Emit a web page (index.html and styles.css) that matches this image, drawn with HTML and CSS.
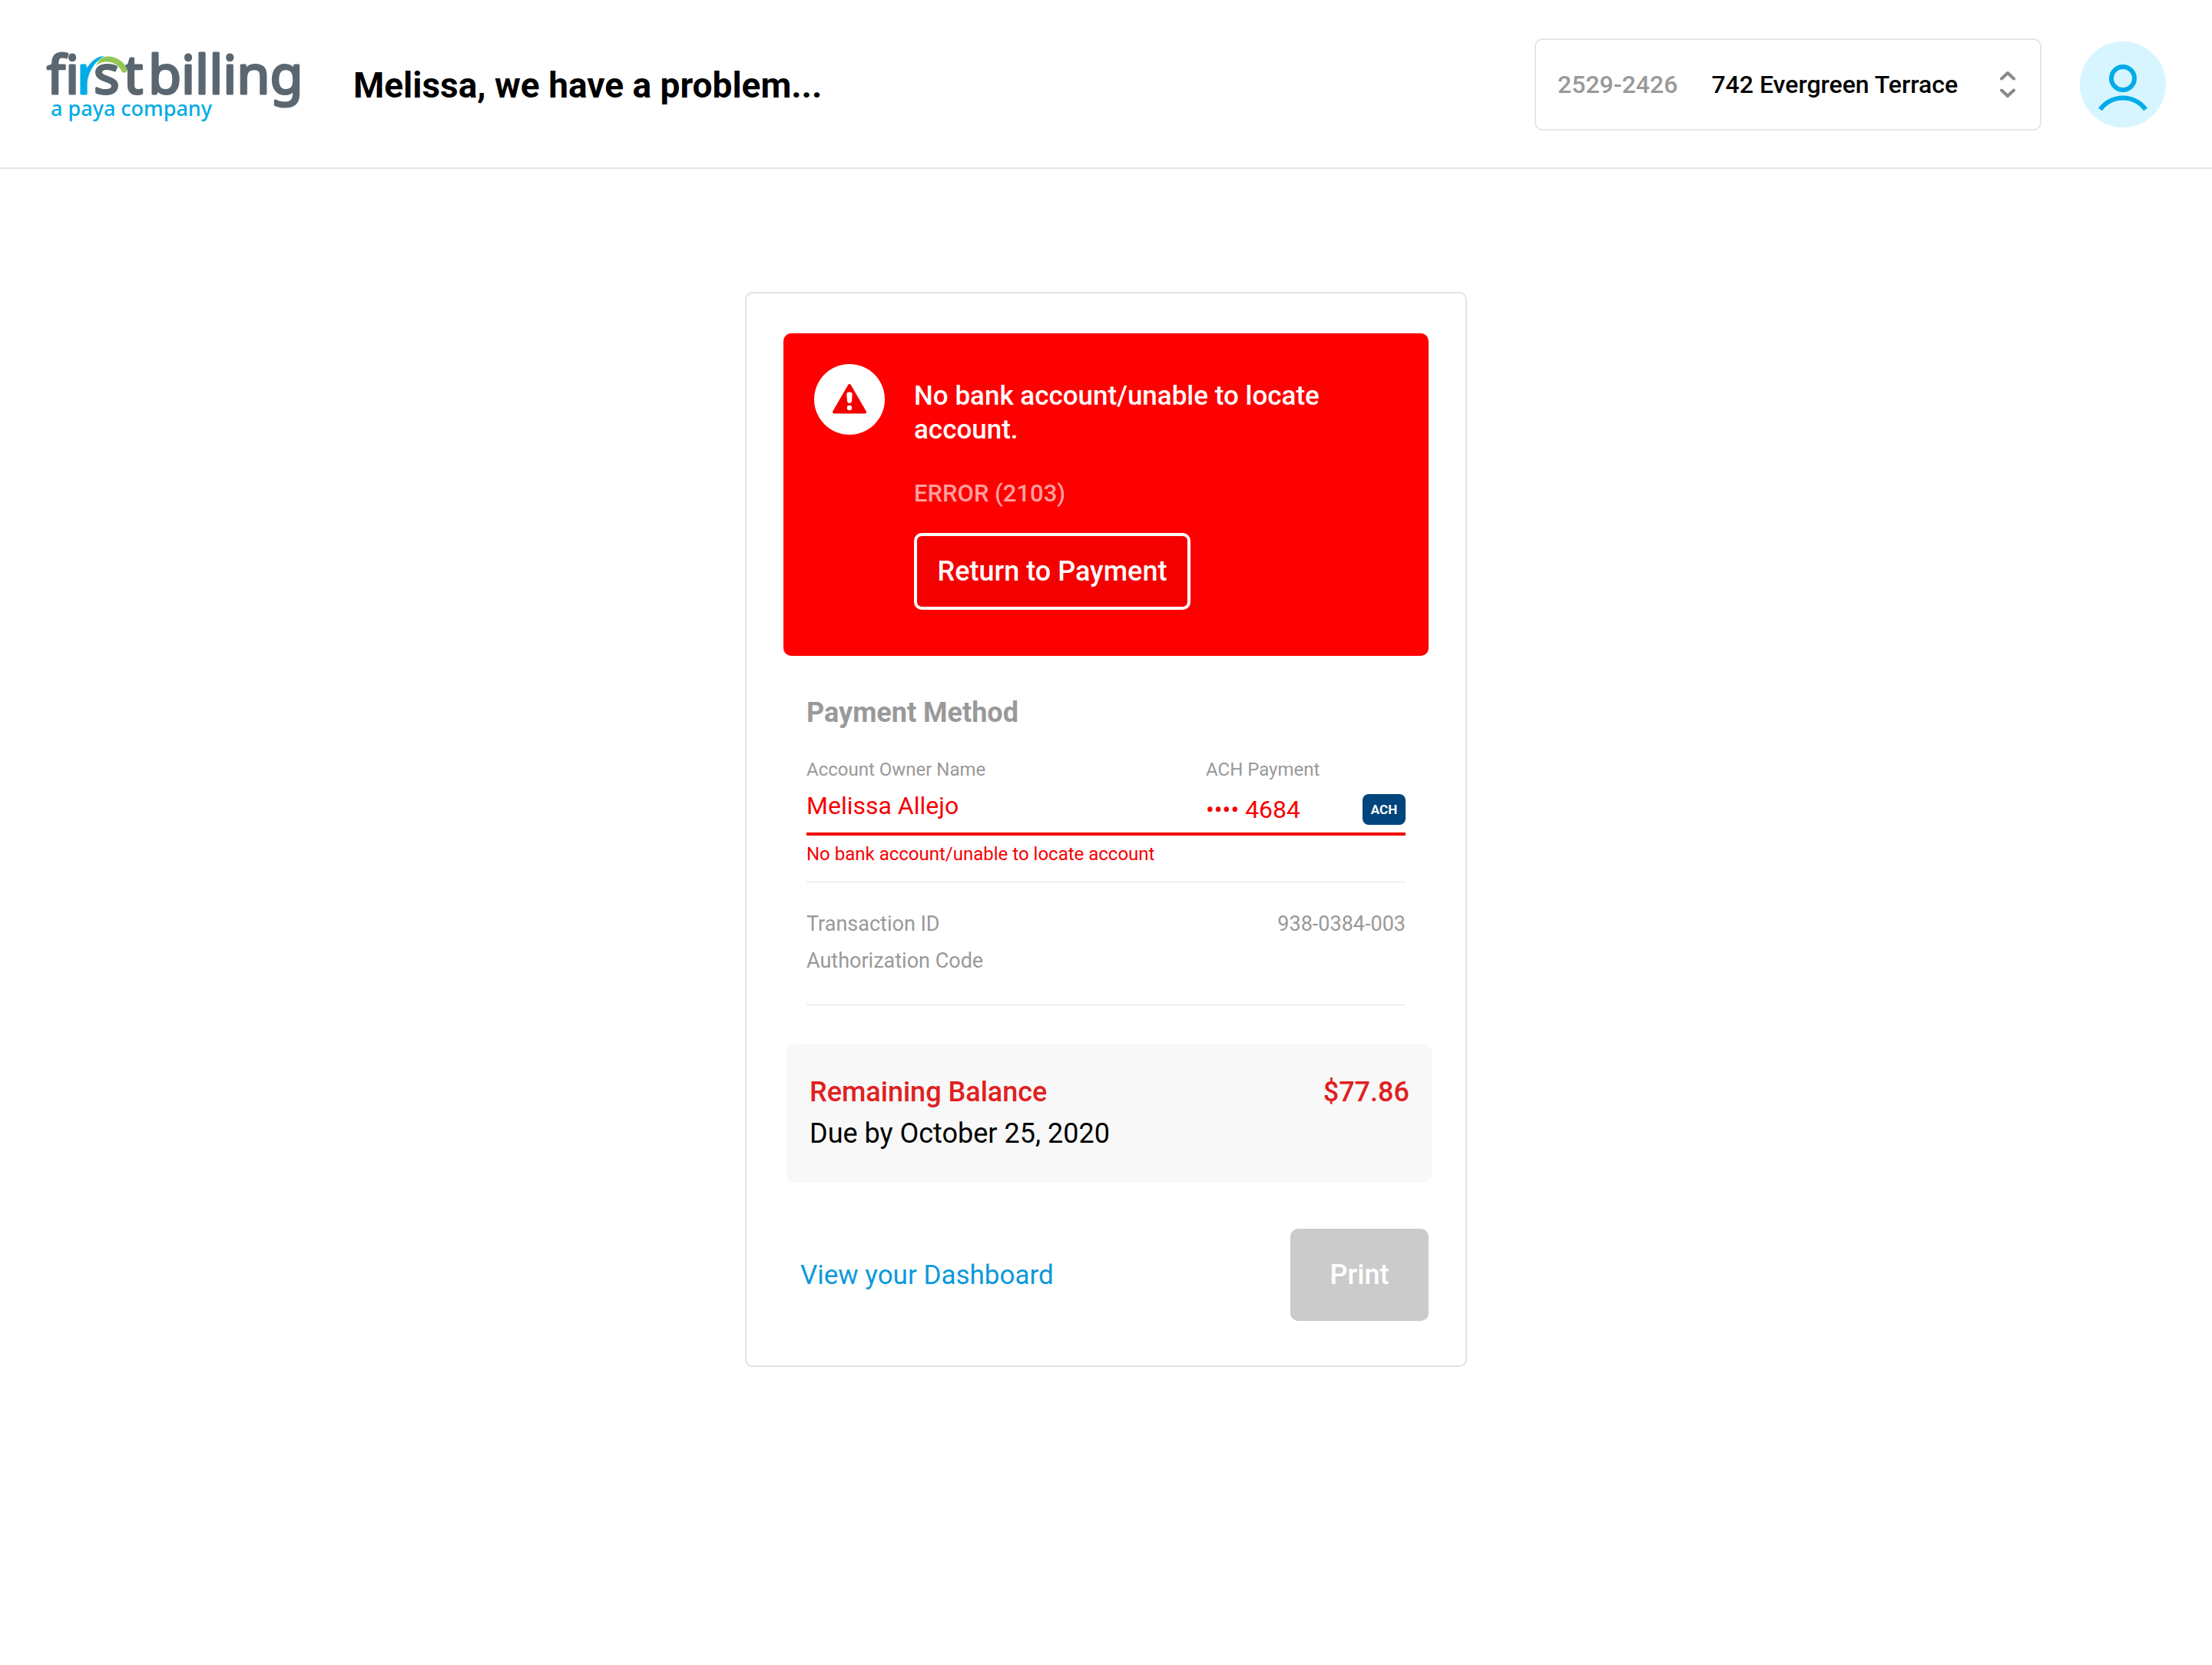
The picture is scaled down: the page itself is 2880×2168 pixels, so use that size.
FILE: index.html
```html
<!DOCTYPE html>
<html lang="en">
<head>
  <meta charset="utf-8">
  <meta name="viewport" content="width=device-width, initial-scale=1">
  <title>Payment problem</title>
  <link rel="stylesheet" href="styles.css">
</head>
<body>
  <header class="topbar">
    <svg class="logo" viewBox="0 0 336 96" role="img" aria-label="firstbilling, a paya company">
      <defs>
        <clipPath id="r-stem"><rect x="36" y="-20" width="19" height="110"/></clipPath>
      </defs>
      <text class="logo-word" x="1" y="60">fi</text>
      <text class="logo-word logo-blue" x="40" y="60" clip-path="url(#r-stem)">r</text>
      <text class="logo-word" x="62" y="60">s</text>
      <text class="logo-word" x="101" y="60">t</text>
      <text class="logo-word" x="133" y="60">billing</text>
      <path class="logo-swoosh-blue" d="M53 27C58 19 65 11 76 11.300C66 16 56 28 53.300 46Z"/>
      <path class="logo-swoosh-green" d="M64.700 24C68 17 72 12 79 11.500C90 10.500 102 18 105.500 28C106 33 100 34.500 98 30C94 22 86 18 77 18.600C72 19 68 21 64.700 24Z"/>
      <text class="logo-tagline" x="6" y="89">a paya company</text>
    </svg>
    <h1 class="page-title">Melissa, we have a problem...</h1>
    <div class="account-picker">
      <label class="account-number" for="account">2529-2426</label>
      <select class="account-select" id="account">
        <option>742 Evergreen Terrace</option>
      </select>
      <svg class="account-arrows" viewBox="0 0 20 36" aria-hidden="true">
        <path d="M2 10.500L10 3L18 10.500M2 25.500L10 33L18 25.500"/>
      </svg>
    </div>
    <button class="avatar" type="button" aria-label="Profile">
      <svg class="avatar-icon" viewBox="0 0 112 112" aria-hidden="true">
        <circle cx="56" cy="48" r="15"/>
        <path d="M26.500 88.500A36.500 36.500 0 0 1 85.500 88.500"/>
      </svg>
    </button>
  </header>

  <main class="page">
    <section class="card">
      <div class="alert" role="alert">
        <svg class="alert-icon" viewBox="0 0 92 92" aria-hidden="true">
          <circle cx="46" cy="46" r="46" fill="#fff"/>
          <path d="M46 28L66 62.500H26Z" fill="#f50000" stroke="#f50000" stroke-width="4" stroke-linejoin="round"/>
          <path d="M42.300 39Q42.300 36.500 46 36.500T49.700 39L49 48.500Q48.700 51 46 51T43 48.500Z" fill="#fff"/>
          <circle cx="46" cy="57" r="3.200" fill="#fff"/>
        </svg>
        <div class="alert-body">
          <h2 class="alert-title">No bank account/unable to locate account.</h2>
          <p class="alert-code">ERROR (2103)</p>
          <button class="alert-button" type="button">Return to Payment</button>
        </div>
      </div>

      <div class="details">
        <h2 class="details-title">Payment Method</h2>
        <dl class="method">
          <div class="method-owner">
            <dt class="method-label">Account Owner Name</dt>
            <dd class="method-value">Melissa Allejo</dd>
          </div>
          <div class="method-account">
            <dt class="method-label">ACH Payment</dt>
            <dd class="method-value">•••• 4684 <span class="ach-badge">ACH</span></dd>
          </div>
        </dl>
        <p class="method-error">No bank account/unable to locate account</p>
        <dl class="codes">
          <div class="codes-row"><dt>Transaction ID</dt><dd>938-0384-003</dd></div>
          <div class="codes-row"><dt>Authorization Code</dt><dd></dd></div>
        </dl>
      </div>

      <div class="balance">
        <p class="balance-row"><span>Remaining Balance</span><span>$77.86</span></p>
        <p class="balance-due">Due by October 25, 2020</p>
      </div>

      <div class="actions">
        <a class="dashboard-link" href="#dashboard">View your Dashboard</a>
        <button class="print-button" type="button" disabled>Print</button>
      </div>
    </section>
  </main>
</body>
</html>
```
FILE: styles.css
```css
* {
  box-sizing: border-box;
}

body,
h1,
h2,
p,
dl,
dd {
  margin: 0;
}

body {
  background: #fff;
  color: #000;
  font-family: Roboto, "Liberation Sans", sans-serif;
}

button,
select {
  margin: 0;
  padding: 0;
  border: 0;
  font: inherit;
}

/* Top bar */

.topbar {
  display: flex;
  align-items: center;
  padding: 50px 60px 48px;
  border-bottom: 2px solid #e6e6e6;
}

.logo {
  flex: none;
  width: 336px;
  height: 96px;
  margin-right: 64px;
  overflow: visible;
}

.logo-word {
  fill: #5b6770;
  stroke: #5b6770;
  stroke-width: 3px;
  stroke-linejoin: round;
  font: 400 70px "Noto Sans", sans-serif;
}

.logo-blue {
  fill: #00ace6;
  stroke: #00ace6;
}

.logo-swoosh-blue {
  fill: #00ace6;
}

.logo-swoosh-green {
  fill: #93c755;
}

.logo-tagline {
  fill: #00ace6;
  font: 500 27px "Noto Sans", sans-serif;
}

.page-title {
  padding-top: 2px;
  font-size: 46px;
  font-weight: 700;
  line-height: 56px;
}

.account-picker {
  display: flex;
  align-items: center;
  width: 660px;
  height: 120px;
  margin-left: auto;
  padding: 0 32px 0 28px;
  border: 2px solid #e6e6e6;
  border-radius: 10px;
  font-size: 32px;
  font-weight: 500;
  line-height: 40px;
}

.account-number {
  margin-right: 44px;
  color: #999;
}

.account-select {
  flex: 1;
  height: 100%;
  appearance: none;
  background: none;
  color: #000;
}

.account-arrows {
  width: 20px;
  height: 36px;
  fill: none;
  stroke: #888;
  stroke-width: 4px;
  stroke-linecap: round;
  stroke-linejoin: round;
}

.avatar {
  flex: none;
  width: 112px;
  height: 112px;
  margin-left: 50px;
  border-radius: 50%;
  background: #d7f5ff;
}

.avatar-icon {
  display: block;
  fill: none;
  stroke: #00ace8;
  stroke-width: 6px;
}

/* Result card */

.page {
  padding: 160px 24px;
}

.card {
  max-width: 940px;
  margin: 0 auto;
  padding: 52px 48px 58px;
  border: 2px solid #e2e2e2;
  border-radius: 10px;
}

.alert {
  display: flex;
  gap: 38px;
  padding: 40px 40px 60px;
  border-radius: 10px;
  background: #f00;
  color: #fff;
}

.alert-icon {
  flex: none;
  width: 92px;
  height: 92px;
}

.alert-body {
  padding-top: 20px;
}

.alert-title {
  font-size: 35px;
  font-weight: 500;
  line-height: 44px;
}

.alert-code {
  margin: 41px 0 31px;
  color: #ff9f9f;
  font-size: 31px;
  font-weight: 500;
  line-height: 40px;
}

.alert-button {
  width: 360px;
  height: 100px;
  border: 4px solid #fff;
  border-radius: 10px;
  background: #f50000;
  color: #fff;
  font-size: 36px;
  font-weight: 500;
}

.details {
  padding: 52px 30px 0;
}

.details-title {
  color: #999;
  font-size: 36px;
  font-weight: 700;
  line-height: 44px;
}

.method {
  display: grid;
  grid-template-columns: 2fr 1fr;
  margin-top: 36px;
  padding-bottom: 10px;
  border-bottom: 4px solid #f50000;
}

.method-label {
  margin-bottom: 11px;
  color: #999;
  font-size: 24px;
  line-height: 32px;
}

.method-account .method-label {
  margin-bottom: 16px;
}

.method-value {
  display: flex;
  align-items: center;
  justify-content: space-between;
  color: #f50000;
  font-size: 32px;
  line-height: 40px;
}

.ach-badge {
  width: 56px;
  height: 40px;
  border-radius: 8px;
  background: #00457c;
  color: #fff;
  font-size: 17px;
  font-weight: 700;
  line-height: 40px;
  text-align: center;
}

.method-error {
  margin-top: 8px;
  color: #f50000;
  font-size: 24px;
  line-height: 32px;
}

.codes {
  margin-top: 20px;
  padding: 30px 0 33px;
  border: solid #e2e2e2;
  border-width: 1px 0;
  color: #999;
  font-size: 27px;
  line-height: 48px;
}

.codes-row {
  display: flex;
  justify-content: space-between;
}

.balance {
  margin: 51px -4px 0 4px;
  padding: 35px 29px 37px 30px;
  border-radius: 10px;
  background: #f8f8f8;
  font-size: 36px;
  line-height: 54px;
}

.balance-row {
  display: flex;
  justify-content: space-between;
  color: #e02020;
  font-weight: 500;
}

.actions {
  display: flex;
  align-items: center;
  justify-content: space-between;
  margin-top: 60px;
  padding-left: 22px;
  font-size: 36px;
}

.dashboard-link {
  color: #0c99da;
  font-size: 35px;
  text-decoration: none;
}

.print-button {
  width: 180px;
  height: 120px;
  border-radius: 10px;
  background: #cbcbcb;
  color: #fff;
  font-weight: 500;
}
```
